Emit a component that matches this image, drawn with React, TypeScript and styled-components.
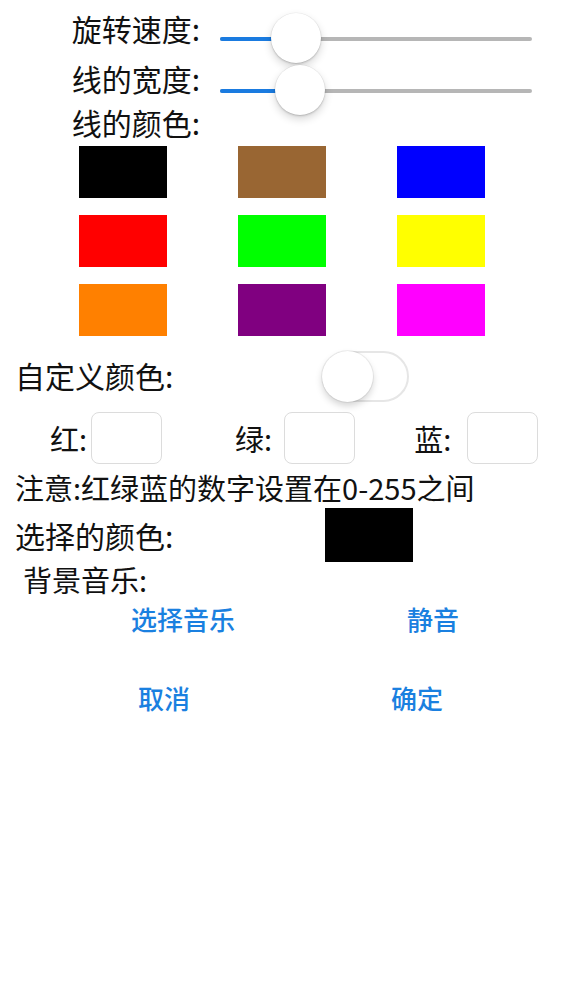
import React, { useState } from 'react'
import styled, { createGlobalStyle } from 'styled-components'

const GlobalStyle = createGlobalStyle`
  html, body {
    margin: 0;
    padding: 0;
    background: #ffffff;
  }
  body {
    font-family: "Noto Sans CJK SC", "Noto Sans", sans-serif;
    color: #111111;
  }
`

const swatches = [
  '#000000', '#996633', '#0000ff',
  '#ff0000', '#00ff00', '#ffff00',
  '#ff8000', '#800080', '#ff00ff',
]

const Slider: React.FC<{ value: number }> = ({ value }) => {
  // thumb travels between the two ends of the track, minus its radius
  const pos = 25 + value * 262
  return (
    <SliderBox>
      <TrackMax />
      <TrackMin style={{ width: pos }} />
      <Thumb style={{ left: pos - 25 }} />
    </SliderBox>
  )
}

const App: React.FC = () => {
  const [custom, setCustom] = useState(false)

  return (
    <Page>
      <GlobalStyle />
      <SliderRow $top={13}>
        <SideLabel $raise={10}>旋转速度:</SideLabel>
        <Slider value={0.195} />
      </SliderRow>
      <SliderRow $top={2}>
        <SideLabel $raise={12}>线的宽度:</SideLabel>
        <Slider value={0.21} />
      </SliderRow>
      <ColorTitle>线的颜色:</ColorTitle>
      <SwatchGrid>
        {swatches.map((c) => (
          <Swatch key={c} $color={c} />
        ))}
      </SwatchGrid>

      <CustomRow>
        <WideLabel $lift={4}>自定义颜色:</WideLabel>
        <Switch $on={custom} onClick={() => setCustom(!custom)}>
          <Knob $on={custom} />
        </Switch>
      </CustomRow>

      <RgbRow>
        <RgbGroup $gap={4}>
          <Text>红:</Text>
          <NumberBox />
        </RgbGroup>
        <RgbGroup $gap={12} $left={73}>
          <Text>绿:</Text>
          <NumberBox />
        </RgbGroup>
        <RgbGroup $gap={16} $left={59}>
          <Text>蓝:</Text>
          <NumberBox />
        </RgbGroup>
      </RgbRow>

      <Note>注意:红绿蓝的数字设置在0-255之间</Note>

      <ChosenRow>
        <WideLabel $lift={0}>选择的颜色:</WideLabel>
        <Chosen />
      </ChosenRow>

      <MusicLabel>背景音乐:</MusicLabel>

      <ButtonRow $pad={103} $gap={90} $width={160} $top={2}>
        <LinkButton>选择音乐</LinkButton>
        <LinkButton>静音</LinkButton>
      </ButtonRow>
      <ButtonRow $pad={114} $gap={153} $width={100} $top={35}>
        <LinkButton>取消</LinkButton>
        <LinkButton>确定</LinkButton>
      </ButtonRow>
    </Page>
  )
}

export default App

const Page = styled.div`
  width: 563px;
  min-height: 1000px;
  background: #fff;
  display: flex;
  flex-direction: column;
`
const SliderRow = styled.div<{ $top: number }>`
  display: flex;
  align-items: center;
  height: 50px;
  margin-top: ${(p) => p.$top}px;
`
const SideLabel = styled.div<{ $raise: number }>`
  width: 200px;
  margin-right: 20px;
  text-align: right;
  font-size: 30px;
  line-height: 30px;
  padding-bottom: ${(p) => p.$raise * 2}px;
  white-space: nowrap;
`
const SliderBox = styled.div`
  position: relative;
  width: 312px;
  height: 50px;
`
const TrackMax = styled.div`
  position: absolute;
  left: 0;
  right: 0;
  top: 24px;
  height: 4px;
  border-radius: 2px;
  background: #b6b6b6;
`
const TrackMin = styled.div`
  position: absolute;
  left: 0;
  top: 24px;
  height: 4px;
  border-radius: 2px;
  background: #1a7be0;
`
const Thumb = styled.div`
  position: absolute;
  top: 0;
  width: 50px;
  height: 50px;
  border-radius: 50%;
  background: #fff;
  box-shadow: 0 4px 8px rgba(0, 0, 0, 0.16), 0 1px 2px rgba(0, 0, 0, 0.18),
    0 0 0 0.5px rgba(0, 0, 0, 0.05);
`
const ColorTitle = styled.div`
  width: 200px;
  text-align: right;
  font-size: 30px;
  line-height: 30px;
  margin-top: -8px;
  white-space: nowrap;
`
const SwatchGrid = styled.div`
  display: grid;
  grid-template-columns: repeat(3, 88px);
  grid-auto-rows: 52px;
  column-gap: 71px;
  row-gap: 17px;
  padding-left: 79px;
  margin-top: 9px;
`
const Swatch = styled.div<{ $color: string }>`
  background: ${(p) => p.$color};
`
const CustomRow = styled.div`
  display: flex;
  align-items: center;
  height: 51px;
  padding-left: 15px;
  margin-top: 15px;
`
const WideLabel = styled.div<{ $lift: number }>`
  width: 310px;
  font-size: 30px;
  line-height: 36px;
  white-space: nowrap;
  padding-bottom: ${(p) => p.$lift}px;
`
const Switch = styled.div<{ $on: boolean }>`
  position: relative;
  box-sizing: border-box;
  width: 87px;
  height: 51px;
  border-radius: 26px;
  border: 2px solid #e6e6e6;
  background: ${(p) => (p.$on ? '#4cd964' : '#fff')};
  margin-left: -3px;
  cursor: pointer;
`
const Knob = styled.div<{ $on: boolean }>`
  position: absolute;
  top: -2px;
  left: ${(p) => (p.$on ? '34px' : '-2px')};
  width: 51px;
  height: 51px;
  border-radius: 50%;
  background: #fff;
  box-shadow: 0 4px 7px rgba(0, 0, 0, 0.17), 0 0 0 1px rgba(0, 0, 0, 0.06);
`
const RgbRow = styled.div`
  display: flex;
  align-items: center;
  height: 52px;
  padding-left: 50px;
  margin-top: 10px;
`
const RgbGroup = styled.div<{ $gap: number; $left?: number }>`
  display: flex;
  align-items: center;
  gap: ${(p) => p.$gap}px;
  margin-left: ${(p) => p.$left ?? 0}px;
`
const Text = styled.span`
  font-size: 29px;
  line-height: 36px;
  white-space: nowrap;
`
const NumberBox = styled.div`
  box-sizing: border-box;
  width: 71px;
  height: 52px;
  border: 1px solid #dcdcdc;
  border-radius: 8px;
  background: #fff;
`
const Note = styled.div`
  padding-left: 15px;
  font-size: 29px;
  line-height: 36px;
  margin-top: 5px;
  white-space: nowrap;
`
const ChosenRow = styled.div`
  display: flex;
  align-items: center;
  padding-left: 15px;
  margin-top: 3px;
`
const Chosen = styled.div`
  width: 88px;
  height: 54px;
  background: #000;
`
const MusicLabel = styled.div`
  padding-left: 23px;
  font-size: 29px;
  line-height: 30px;
  margin-top: 2px;
  white-space: nowrap;
`
const ButtonRow = styled.div<{ $pad: number; $gap: number; $width: number; $top: number }>`
  display: grid;
  grid-template-columns: repeat(2, ${(p) => p.$width}px);
  column-gap: ${(p) => p.$gap}px;
  padding-left: ${(p) => p.$pad}px;
  margin-top: ${(p) => p.$top}px;
`
const LinkButton = styled.button`
  height: 44px;
  border: 0;
  padding: 0;
  background: transparent;
  font-family: inherit;
  font-size: 26px;
  font-weight: 500;
  color: #1a80e0;
  cursor: pointer;
`
